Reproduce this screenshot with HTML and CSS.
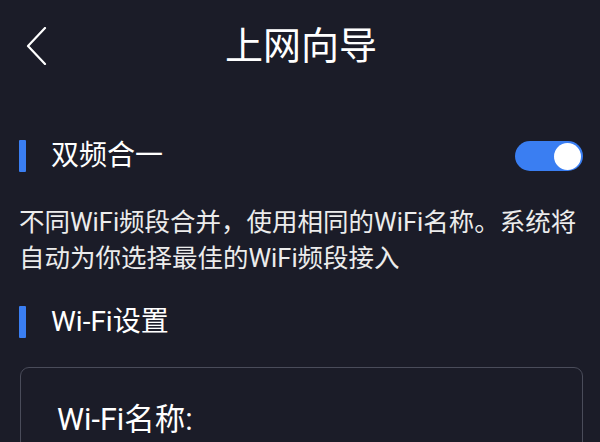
FILE: index.html
```html
<!DOCTYPE html>
<html lang="zh-CN">
<head>
<meta charset="utf-8">
<link rel="stylesheet" href="styles.css">
</head>
<body>
<div class="page">
  <header class="header">
    <span class="back">
      <svg width="22" height="38" viewBox="0 0 22 38"><polyline points="19,1 2,19 19,37" fill="none" stroke="#ffffff" stroke-width="2.2" stroke-linecap="round" stroke-linejoin="round"/></svg>
    </span>
    <h1 class="title">上网向导</h1>
  </header>

  <div class="section-row first">
    <span class="bar"></span>
    <span class="section-title">双频合一</span>
    <span class="toggle"><span class="knob"></span></span>
  </div>
  <p class="desc">不同WiFi频段合并，使用相同的WiFi名称。系统将自动为你选择最佳的WiFi频段接入</p>

  <div class="section-row second">
    <span class="bar"></span>
    <span class="section-title">Wi-Fi设置</span>
  </div>

  <div class="card">
    <div class="field-label">Wi-Fi名称:</div>
  </div>
</div>
</body>
</html>
```

FILE: styles.css
```css
html, body {
  margin: 0;
  padding: 0;
  background: #1b1c28;
}
body {
  width: 600px;
  height: 442px;
  overflow: hidden;
  font-family: Roboto, "Noto Sans CJK SC", sans-serif;
  color: #ffffff;
}
.page {
  padding: 0 17px 0 19px;
}
.header {
  position: relative;
  height: 92px;
  display: flex;
  align-items: center;
  justify-content: center;
}
.back {
  position: absolute;
  left: 7px;
  top: 27px;
  display: block;
  line-height: 0;
}
.title {
  margin: 0;
  font-size: 38px;
  font-weight: 400;
  line-height: 92px;
}
.section-row {
  display: flex;
  align-items: center;
  height: 32px;
}
.section-row.first {
  margin-top: 48px;
}
.section-row.second {
  margin-top: 30px;
}
.bar {
  width: 7px;
  height: 32px;
  background: #3a7ef2;
  border-radius: 1px;
  flex: none;
}
.section-title {
  margin-left: 25px;
  font-size: 28px;
  line-height: 32px;
  flex: 1;
}
.toggle {
  width: 68px;
  height: 30px;
  border-radius: 15px;
  background: #3a7ef2;
  display: flex;
  align-items: center;
  justify-content: flex-end;
  padding-right: 2px;
  box-sizing: border-box;
  flex: none;
}
.knob {
  width: 27px;
  height: 27px;
  border-radius: 50%;
  background: #ffffff;
}
.desc {
  margin: 32px 0 0 0;
  font-size: 25.5px;
  line-height: 36px;
  color: #ececec;
}
.card {
  margin: 29px 0 0 1px;
  border: 1.5px solid #4a4c5a;
  border-radius: 9px;
  height: 120px;
  padding: 32px 0 0 36px;
}
.field-label {
  font-size: 30.5px;
  line-height: 40px;
}
```
